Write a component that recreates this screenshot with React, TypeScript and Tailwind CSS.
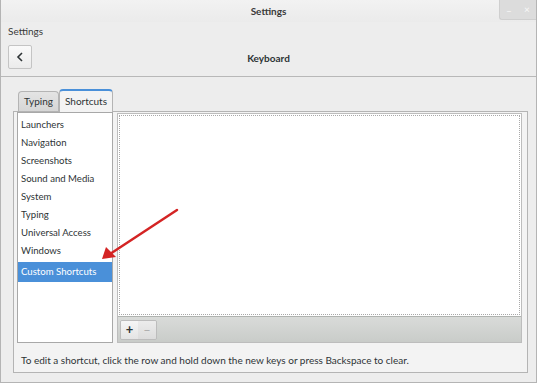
const sections = [
  "Launchers",
  "Navigation",
  "Screenshots",
  "Sound and Media",
  "System",
  "Typing",
  "Universal Access",
  "Windows",
];

export default function App() {
  return (
    <div className="w-[540px] h-[385px] bg-white font-['Lato',sans-serif] text-[#2e3436]">
      <div className="w-[537px] h-[383px] bg-[#ededed] border-x border-b border-[#b4b4b4] flex flex-col">
        {/* Title bar */}
        <div className="relative h-[22px] flex items-center justify-center bg-gradient-to-b from-[#f2f2f2] to-[#ebebeb]">
          <span className="text-[10px] font-bold text-[#3a3a3a]">Settings</span>
          <div className="absolute right-0 top-0 w-[37px] h-[20px] bg-[#dcdcdc] border-l border-b border-[#cfcfcf] rounded-bl-[3px] flex items-center justify-around text-[10px] text-[#f8f8f8]">
            <span className="mt-[2px]">–</span>
            <span>×</span>
          </div>
        </div>

        {/* Header */}
        <div className="px-[7px] border-b border-[#b8b8b8] h-[55px] flex flex-col">
          <div className="text-[10px] leading-[18px] text-[#3a3a3a]">Settings</div>
          <div className="relative flex items-center justify-center h-[24px] mt-[5px]">
            <button className="absolute left-0 top-0 w-[24px] h-[24px] border border-[#c4c4c4] rounded-[2px] bg-gradient-to-b from-[#fafafa] to-[#ebebeb] flex items-center justify-center">
              <svg width="8" height="10" viewBox="0 0 8 10">
                <path d="M6 1 L2 5 L6 9" fill="none" stroke="#2e3436" strokeWidth="1.6" />
              </svg>
            </button>
            <span className="text-[10px] font-bold text-[#2e3436] mt-[2px]">Keyboard</span>
          </div>
        </div>

        {/* Notebook */}
        <div className="flex flex-col pl-[12px] pr-[8px] pt-[12px]">
          <div className="flex items-end h-[22px] pl-[5px]">
            <div className="w-[41px] h-[20px] border border-b-0 border-[#b4b4b4] rounded-t-[4px] bg-gradient-to-b from-[#e4e4e4] to-[#d6d6d6] flex items-center justify-center text-[10px] text-[#2e3436]">
              Typing
            </div>
            <div className="w-[54px] h-[23px] -mb-px border border-b-0 border-[#b4b4b4] border-t-2 border-t-[#4a90d9] rounded-t-[4px] bg-[#f3f3f3] flex items-center justify-center text-[10px] text-[#2e3436] relative z-10">
              Shortcuts
            </div>
          </div>
          <div className="h-[262px] border border-[#b4b4b4] bg-[#f3f3f3] flex flex-col">
            <div className="flex gap-[4px] pl-[3px] pt-0 pr-[5px]">
              {/* Section list */}
              <div className="relative w-[96px] h-[231px] bg-white border border-[#a8a8a8] flex flex-col pt-[3px]">
                {sections.map((s) => (
                  <div key={s} className="h-[18px] leading-[18px] pl-[3px] text-[9.6px] text-[#2e3436]">
                    {s}
                  </div>
                ))}
                <div className="mt-[2px] h-[20px] leading-[20px] pl-[3px] text-[9.6px] text-white bg-[#4a90d9]">
                  Custom Shortcuts
                </div>
              </div>

              {/* Shortcuts area */}
              <div className="flex-1 h-[230px] mt-[1px] flex flex-col border border-[#bdbdbd]">
                <div className="flex-1 bg-white p-[1px]">
                  <div className="w-full h-full border border-dotted border-[#a9a9a9]" />
                </div>
                <div className="h-[26px] bg-gradient-to-b from-[#d9dbd9] to-[#c9ccc9] border-t border-[#b0b3b0] flex items-center pl-[2px]">
                  <div className="flex h-[20px] border border-[#bcbcbc] rounded-[2px] overflow-hidden">
                    <div className="w-[17px] bg-gradient-to-b from-[#f6f6f6] to-[#e4e4e4] flex items-center justify-center text-[13px] font-bold leading-none text-[#2e3436]">
                      +
                    </div>
                    <div className="w-[18px] bg-gradient-to-b from-[#ececec] to-[#dcdcdc] flex items-center justify-center text-[12px] leading-none text-[#a8a8a8]">
                      −
                    </div>
                  </div>
                </div>
              </div>
            </div>
            <div className="pl-[7px] pt-[10px] text-[10px] text-[#2e3436]">
              To edit a shortcut, click the row and hold down the new keys or press Backspace to clear.
            </div>
          </div>
        </div>
      </div>

      {/* Annotation arrow */}
      <svg className="absolute left-0 top-0 pointer-events-none" width="540" height="385">
        <line x1="177" y1="210" x2="110" y2="254" stroke="#d42424" strokeWidth="2.5" strokeLinecap="round" />
        <polygon points="102,259 106,247 116,257" fill="#d42424" />
      </svg>
    </div>
  );
}
